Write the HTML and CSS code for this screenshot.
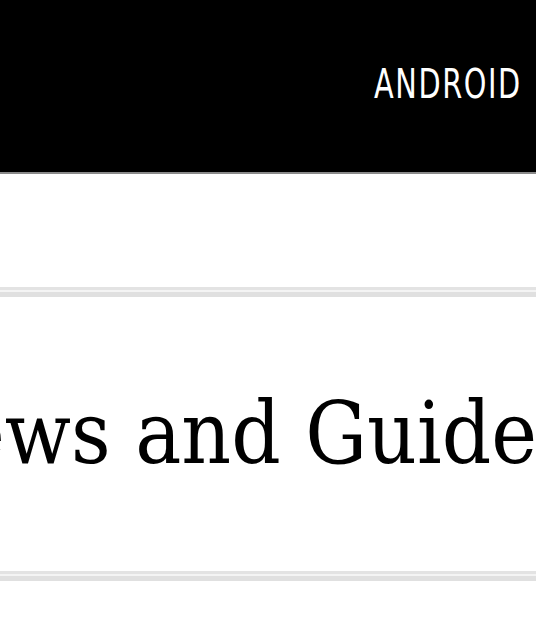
FILE: index.html
```html
<!DOCTYPE html>
<html>
<head>
<meta charset="utf-8">
<link rel="stylesheet" href="styles.css">
</head>
<body>
<header class="topbar">
  <nav class="nav"><span class="nav-item">ANDROID</span></nav>
</header>
<div class="spacer"></div>
<div class="rule"></div>
<div class="title-block">
  <h1 class="title">ews and Guides</h1>
</div>
<div class="rule"></div>
</body>
</html>
```

FILE: styles.css
```css
html, body {
  margin: 0;
  padding: 0;
  background: #fff;
  overflow: hidden;
}
body {
  width: 536px;
  height: 640px;
}
.topbar {
  height: 172px;
  background: #000;
  border-bottom: 2px solid #8a8a8a;
  display: flex;
  justify-content: flex-end;
  align-items: center;
  overflow: hidden;
}
.nav {
  display: flex;
  padding-right: 14px;
  padding-bottom: 4px;
}
.nav-item {
  font-family: "DejaVu Sans", sans-serif;
  font-stretch: condensed;
  font-size: 40px;
  color: #fff;
  letter-spacing: 2px;
  display: inline-block;
  transform: scaleX(0.8);
  transform-origin: right center;
}
.spacer {
  height: 113px;
}
.rule {
  height: 2px;
  border-top: 3px solid #e3e3e3;
  border-bottom: 5px solid #e0e0e0;
  background: #f4f4f4;
}
.title-block {
  height: 274px;
  overflow: hidden;
  box-sizing: border-box;
  padding-top: 93px;
}
.title {
  margin: 0 0 0 -41px;
  font-family: "DejaVu Serif", serif;
  font-stretch: condensed;
  font-weight: normal;
  font-size: 86px;
  line-height: 86px;
  color: #000;
  white-space: nowrap;
}
```
